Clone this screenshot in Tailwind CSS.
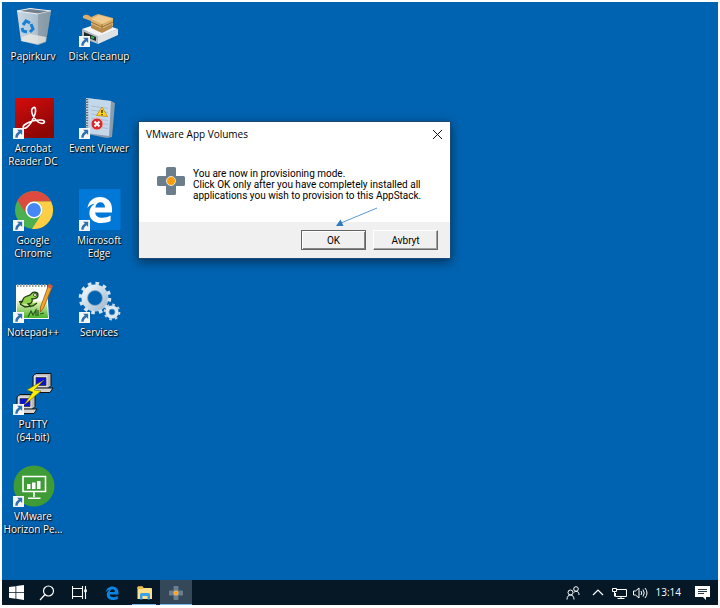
<!DOCTYPE html>
<html lang="nb">
<head>
<meta charset="utf-8">
<title>Desktop</title>
<script src="https://cdn.jsdelivr.net/npm/@tailwindcss/browser@4"></script>
</head>
<body class="flex min-h-screen flex-col bg-white p-[2px] pb-[3px] font-['Open_Sans','Noto_Sans',sans-serif]">
<svg class="absolute size-0" aria-hidden="true">
  <defs>
    <symbol id="shortcut" viewBox="0 0 12 12">
      <rect width="12" height="12" fill="#f4f6f8"/>
      <path d="M4.500 2h5.500v5.500L8.200 5.800C6.300 7 5.200 8.500 5 10.500H2.500C2.400 7.800 3.800 5.300 6.300 3.900z" fill="#2f6fae"/>
    </symbol>
    <symbol id="volumes" viewBox="0 0 28 28">
      <path d="M10.500 0h7a1.500 1.500 0 0 1 1.500 1.500V9h7.500a1.500 1.500 0 0 1 1.500 1.500v7a1.500 1.500 0 0 1-1.500 1.500H19v7.500a1.500 1.500 0 0 1-1.500 1.500h-7A1.500 1.500 0 0 1 9 26.500V19H1.500A1.500 1.500 0 0 1 0 17.500v-7A1.500 1.500 0 0 1 1.500 9H9V1.500A1.500 1.500 0 0 1 10.500 0z" fill="#6c7e8c"/>
      <circle cx="14" cy="14" r="4.500" fill="#ff9d0a" stroke="#e9e4d6"/>
    </symbol>
    <symbol id="edge" viewBox="0 0 28 28">
      <path d="M1.500 12.500C2.500 5.500 7.500 1 14.500 1 22 1 27 6 27 13.500V17H9.500c.3 4 3.500 5.500 7.500 5.500 3 0 5.800-.8 8.500-2.300V26c-3 1.500-6 2-9.500 2C8 28 3.500 23.500 3.500 17.500c0-4 2-7.500 5.500-9.500C5.500 8.500 3 10 1.500 12.500zM9.700 12h10C19.600 8.500 18 6.500 15 6.500S10.200 8.500 9.700 12z"/>
    </symbol>
    <linearGradient id="red" x1="0" y1="0" x2=".5" y2="1"><stop stop-color="#d50c0c"/><stop offset="1" stop-color="#8c0606"/></linearGradient>
    <linearGradient id="bin" x1="0" x2="1"><stop stop-color="#dfe5ea"/><stop offset=".55" stop-color="#c3ccd4"/><stop offset="1" stop-color="#8f9ca6"/></linearGradient>
    <linearGradient id="steel" x1="0" y1="0" x2="1" y2="1"><stop stop-color="#eef6fb"/><stop offset="1" stop-color="#a3bccf"/></linearGradient>
    <linearGradient id="grass" x1="0" y1="0" x2="0" y2="1"><stop stop-color="#f2f6c8"/><stop offset="1" stop-color="#46b429"/></linearGradient>
  </defs>
</svg>

<main class="relative flex-1 overflow-hidden bg-[#0063b1]">
  <ul class="grid grid-flow-col grid-cols-[62px_62px] grid-rows-[repeat(6,92px)] justify-start gap-x-1 pt-[3px] text-center text-[10px] leading-[13px] text-white [text-shadow:1px_1px_1px_#000,0_0_2px_#000]">
    <li><a href="#" class="flex flex-col items-center gap-px">
      <svg class="size-11" viewBox="0 0 44 44" aria-hidden="true">
        <path d="M6 6 19 3.500 40 6l-5 31-8 3-17-4z" fill="url(#bin)" opacity=".9"/>
        <path d="M6 6 19 3.500 40 6 27 9z" fill="#71818d" stroke="#eef1f4"/>
        <path d="M27 9l13-3-5 31-8 3z" fill="#8797a3" opacity=".7"/>
        <path d="M11 32l8-3 16 3-.5 4.500L27 39l-16-3z" fill="#eee9e4" opacity=".75"/>
        <g fill="none" stroke="#1480d8" stroke-width="3"><path d="M12 20l3-4 4 2"/><path d="M20 19l2 5-3 3"/><path d="M16 27l-4-1-1-3"/></g>
      </svg><span>Papirkurv</span></a></li>
    <li><a href="#" class="flex flex-col items-center gap-px">
      <svg class="size-11" viewBox="0 0 44 44" aria-hidden="true">
        <rect x="4" y="1" width="39" height="40" fill="url(#red)"/>
        <path d="M22 11c2-2 3.500 1 2 6-1.500 4.500-5 11-8.500 13.500-3 2-5-.5-1.500-3 4-2.700 10-4.500 15.500-4.500 5 0 5 3.500 1.500 3.500-4 0-8-5-9.500-9-1-2.500-1-5.500.5-6.500z" fill="none" stroke="#fff" stroke-width="1.600"/>
        <use href="#shortcut" x="2" y="31" width="11" height="11"/>
      </svg><span>Acrobat<br>Reader DC</span></a></li>
    <li><a href="#" class="flex flex-col items-center gap-px">
      <svg class="size-11" viewBox="0 0 44 44" aria-hidden="true">
        <circle cx="23" cy="21" r="19" fill="#4caf50"/>
        <path d="M6.550 11.500A19 19 0 0 1 39.450 11.500L41 12.500H23A8.500 8.500 0 0 0 15.640 25.250z" fill="#dd4b3e"/>
        <path d="M39.950 12.500A19 19 0 0 1 21 39.900L30.360 25.250A8.500 8.500 0 0 0 23 12.500z" fill="#ffce44"/>
        <circle cx="23" cy="21" r="8.500" fill="#fff"/><circle cx="23" cy="21" r="6.900" fill="#4587f3"/>
        <use href="#shortcut" x="2" y="31" width="11" height="11"/>
      </svg><span>Google<br>Chrome</span></a></li>
    <li><a href="#" class="flex flex-col items-center gap-px">
      <svg class="size-11" viewBox="0 0 44 44" aria-hidden="true">
        <path d="M5 4h31l2 34H5z" fill="#fdfdfa"/>
        <path d="M6 20h30l1 17H6z" fill="url(#grass)"/>
        <path d="M6 4.500h29" stroke="#8f9a92" stroke-width="3" stroke-dasharray="1.500 1.500"/>
        <path d="M9 23c3-1 2-6 5-7 3-2 5-1 6-3 2-3 7-2 7 1 0 4-4 4-6 4 1 3-1 5-4 5l3 3M9 23l5 3 8-1 4-3M12 20l-4 1" fill="#8fd34a" stroke="#203d13" stroke-width="1.300"/>
        <circle cx="24" cy="14" r="1.500" fill="#fff" stroke="#222" stroke-width=".7"/>
        <path d="M17 36l3-6 2 4 3-5v6m2-6v6m2-2 4-1" fill="none" stroke="#26571b" stroke-width="1.200"/>
        <path d="M38 3l3.500 2-9 22-3 4v-5z" fill="#f4a62a" stroke="#a15c14" stroke-width=".8"/><path d="M38 3l3.500 2-1.200 3-3.500-2z" fill="#d95745"/>
        <use href="#shortcut" x="2" y="31" width="11" height="11"/>
      </svg><span>Notepad++</span></a></li>
    <li><a href="#" class="flex flex-col items-center gap-px">
      <svg class="size-11" viewBox="0 0 44 44" aria-hidden="true">
        <g id="pc"><path d="M22 3l3-2.500h15v12l-3 3H22z" fill="#b9b9b9" stroke="#111"/><path d="M23 2.500h13.500V14H23z" fill="#dedede"/><path d="M25 4.500h10v8H25z" fill="#0a10d8" stroke="#333" stroke-width=".7"/>
        <path d="M20 18l4-3h18l-3 4.500H20z" fill="#d2d2d2" stroke="#111"/></g>
        <use href="#pc" x="-16" y="21"/>
        <path d="M33 7 16 17l6 2-9 13 17-14-7-1z" fill="#ffef00" stroke="#777100" stroke-width=".6"/>
        <use href="#shortcut" x="2" y="31" width="11" height="11"/>
      </svg><span>PuTTY<br>(64-bit)</span></a></li>
    <li><a href="#" class="flex flex-col items-center gap-px">
      <svg class="size-11" viewBox="0 0 44 44" aria-hidden="true">
        <circle cx="23" cy="21" r="20.500" fill="#3f9b35"/>
        <path d="M12 11.500h22.500v15H12zM23 26.500V32m-6 1.200h12.500" fill="none" stroke="#fff" stroke-width="1.600"/>
        <path d="M16 19h3.500v5H16zM21 17.500h3.500V24H21zM26 16h3.500v8H26z" fill="#fff"/>
        <use href="#shortcut" x="2" y="31" width="11" height="11"/>
      </svg><span>VMware<br><span class="whitespace-nowrap">Horizon Pe...</span></span></a></li>
    <li><a href="#" class="flex flex-col items-center gap-px">
      <svg class="size-11" viewBox="0 0 44 44" aria-hidden="true">
        <path d="M5 24 23 18l18 6-20 8z" fill="#f3f4f5"/>
        <path d="M5 24l16 7v8L5 33z" fill="#b7bcc0"/><path d="M21 31l20-7v6l-20 9z" fill="#dfe2e4"/>
        <path d="M7 27l12 5v4L7 31z" fill="#20292a"/><path d="M14 32l3 1" stroke="#31c443" stroke-width="2"/>
        <path d="M6 11q4-3 8 1l7-3 15 4v8l-10 6-12-5v-6l-8-3z" fill="#d9ae6b"/>
        <path d="M14 14l8-4 14 4-11 5z" fill="#efca8d"/><path d="M14 17l11 5 11-5M25 19v8" stroke="#9c7438" fill="none"/>
        <path d="M14 19l11 5 10-5v4l-10 5-11-5z" fill="#b98b4b"/>
        <use href="#shortcut" x="2" y="31" width="11" height="11"/>
      </svg><span class="whitespace-nowrap">Disk Cleanup</span></a></li>
    <li><a href="#" class="flex flex-col items-center gap-px">
      <svg class="size-11" viewBox="0 0 44 44" aria-hidden="true">
        <path d="M10 1l24 3 4 2-3 34-5 1-20-4z" fill="#8a9daf"/>
        <path d="M9 1l25 3-2 35-23-3z" fill="#c3d8ea"/>
        <path d="M14 9l17 2.500M14 13l17 2.500M14 17l17 2.500M14 21l17 2.500M14 25l17 2.500M14 29l17 2.500" stroke="#9fb8d0" stroke-width=".8"/>
        <path d="M9.500 2v34" stroke="#5a6a79" stroke-width="3.500" stroke-dasharray="1.300 1.300"/>
        <path d="M25 10l5.500 9.500-11-1z" fill="#ffd21c" stroke="#c98d06" stroke-width=".8" stroke-linejoin="round"/><path d="M25 13v3m0 1v1.200" stroke="#332" stroke-width="1.400"/>
        <circle cx="20" cy="27" r="6" fill="#d42a2f" stroke="#f0b6b6"/><path d="M17.500 24.500l5 5m0-5-5 5" stroke="#fff" stroke-width="2"/>
        <use href="#shortcut" x="2" y="31" width="11" height="11"/>
      </svg><span class="whitespace-nowrap">Event Viewer</span></a></li>
    <li><a href="#" class="flex flex-col items-center gap-px">
      <svg class="size-11" viewBox="0 0 44 44" aria-hidden="true">
        <path d="M2 0h41.500v41H2z" fill="#0078d7"/>
        <use href="#edge" x="9" y="7" width="27" height="27" fill="#fff"/>
        <use href="#shortcut" x="2" y="31" width="11" height="11"/>
      </svg><span>Microsoft<br>Edge</span></a></li>
    <li><a href="#" class="flex flex-col items-center gap-px">
      <svg class="size-11" viewBox="0 0 44 44" aria-hidden="true">
        <circle cx="18" cy="17" r="10.500" fill="none" stroke="url(#steel)" stroke-width="6"/>
        <circle cx="18" cy="17" r="14.500" fill="none" stroke="#d3e3ef" stroke-width="3.500" stroke-dasharray="3.600 3.992"/>
        <circle cx="18" cy="17" r="7.500" fill="none" stroke="#8eabc2" stroke-width=".8"/>
        <circle cx="35" cy="31" r="4.800" fill="none" stroke="#dce9f2" stroke-width="3.600"/>
        <circle cx="35" cy="31" r="7.300" fill="none" stroke="#c4d7e5" stroke-width="2.200" stroke-dasharray="2.600 3.133"/>
        <circle cx="35" cy="31" r="3" fill="none" stroke="#8aa5ba" stroke-width=".7"/>
        <use href="#shortcut" x="2" y="31" width="11" height="11"/>
      </svg><span>Services</span></a></li>
  </ul>

  <section role="dialog" aria-labelledby="dlg-title" class="absolute top-[119px] left-[136px] w-[313px] border border-[#1b4a78] bg-white text-black shadow-[0_3px_10px_rgba(0,0,0,0.5)]">
    <header class="flex h-6 items-center justify-between pr-2 pl-[7px]">
      <h1 id="dlg-title" class="text-[10px] leading-6">VMware App Volumes</h1>
      <button type="button" aria-label="Close" class="size-[9px]"><svg class="size-[9px]" viewBox="0 0 9 9" fill="none" stroke="#111" aria-hidden="true"><path d="M0 0l9 9m0-9L0 9"/></svg></button>
    </header>
    <div class="flex gap-2 pt-[21px] pb-[21px] pl-[18px]">
      <svg class="size-7 shrink-0" aria-hidden="true"><use href="#volumes"/></svg>
      <p class="pt-px font-[Roboto,sans-serif] text-[10px] leading-[11px] whitespace-nowrap">You are now in provisioning mode.<br>Click OK only after you have completely installed all<br>applications you wish to provision to this AppStack.</p>
    </div>
    <footer class="flex h-9 items-center justify-end gap-[7px] bg-[#f0f0f0] pr-3 font-[Roboto,sans-serif] text-[10px]">
      <button type="button" class="h-5 w-[65px] border border-[#646464] shadow-[inset_1px_1px_#fff,inset_-1px_-1px_#848484]">OK</button>
      <button type="button" class="h-5 w-[65px] border border-t-white border-r-[#696969] border-b-[#696969] border-l-white shadow-[inset_-1px_-1px_#a0a0a0]">Avbryt</button>
    </footer>
  </section>
  <svg class="absolute top-[204px] left-[333px] h-6 w-11" viewBox="0 0 44 24" aria-hidden="true"><path d="M42 2 6 17" stroke="#5b9bd5" fill="none"/><path d="M1 20l4.500-6.500 3 6.500z" fill="#2e7cc0"/></svg>
</main>

<nav aria-label="Taskbar" class="flex h-[25px] items-center justify-between bg-[#061826] pr-2 text-white">
  <div class="flex h-full">
    <button type="button" aria-label="Start" class="flex w-[29px] items-center justify-center"><svg class="size-[15px]" viewBox="0 0 15 15" fill="#fff" aria-hidden="true"><path d="M0 2l6.500-.8V7H0zM7.300 1.100 15 0v7H7.300zM0 7.800h6.500v5.900L0 12.800zM7.300 7.800H15V15l-7.700-1.200z"/></svg></button>
    <button type="button" aria-label="Search" class="flex w-8 items-center justify-center"><svg class="size-4" viewBox="0 0 16 16" fill="none" stroke="#fff" stroke-width="1.200" aria-hidden="true"><circle cx="9.500" cy="6" r="5"/><path d="M6 9.500 1 15"/></svg></button>
    <button type="button" aria-label="Task view" class="flex w-8 items-center justify-center"><svg class="size-[15px]" viewBox="0 0 15 15" fill="none" stroke="#fff" stroke-width="1.100" aria-hidden="true"><path d="M.5 1v2.500h10V1M.5 14v-2.500h10V14M.5 3.500v8M10.500 3.500v8M13.500 1v13"/><path d="M12.200 4.500h2.600v2.600h-2.600z" fill="#fff" stroke="none"/></svg></button>
    <button type="button" aria-label="Microsoft Edge" class="flex w-[33px] items-center justify-center"><svg class="size-[14px] fill-[#0a84e0]" aria-hidden="true"><use href="#edge"/></svg></button>
    <button type="button" aria-label="File Explorer" class="relative flex w-8 items-center justify-center after:absolute after:inset-x-1 after:bottom-0 after:h-px after:bg-[#76b9ed]"><svg class="h-[14px] w-[15px]" viewBox="0 0 15 14" aria-hidden="true"><path d="M.5 1.500Q.5.500 1.500.500h4l1 1.500H14q1 0 1 1v10H.5z" fill="#ffe08a"/><path d="M.5 1.500Q.5.500 1.500.500h4l1 1.500v1H.5z" fill="#f0bd4c"/><path d="M3 13.500V8.500Q3 7 4.500 7h7Q13 7 13 8.500v5h-2.500V10h-5v3.500z" fill="#3ba0e8"/></svg></button>
    <button type="button" aria-label="VMware App Volumes" class="relative flex w-8 items-center justify-center bg-[#35485a] after:absolute after:inset-x-0 after:bottom-0 after:h-px after:bg-[#76b9ed]"><svg class="size-[14px]" aria-hidden="true"><use href="#volumes"/></svg></button>
  </div>
  <div class="flex items-center">
    <button type="button" aria-label="People" class="mr-3"><svg class="size-[14px]" viewBox="0 0 14 14" fill="none" stroke="#fff" aria-hidden="true"><circle cx="4.500" cy="6.500" r="2.500"/><path d="M1 13.500C1 10.500 2.500 9 4.500 9S8 10.500 8 13.500"/><circle cx="10" cy="3" r="2.300"/><path d="M8 6.500C8.500 5.500 9 5.300 10 5.300c2 0 3 1.200 3 3.700"/></svg></button>
    <button type="button" aria-label="Show hidden icons" class="mr-2"><svg class="h-[7px] w-3" viewBox="0 0 12 7" fill="none" stroke="#fff" stroke-width="1.200" aria-hidden="true"><path d="M1 6l5-5 5 5"/></svg></button>
    <button type="button" aria-label="Network" class="mr-[6px]"><svg class="h-3 w-[15px]" viewBox="0 0 15 12" fill="none" stroke="#fff" aria-hidden="true"><path d="M5 2.500h9.500v7H3.500V6M9 9.500v2M5.500 11.500h7M.5 1.500h4v3h-4zM2.500 4.500v5"/></svg></button>
    <button type="button" aria-label="Volume" class="mr-2"><svg class="h-3 w-[15px]" viewBox="0 0 15 12" fill="none" stroke="#fff" aria-hidden="true"><path d="M.5 4h2L6 1v10L2.500 8h-2zM8 4q1.500 2 0 4M10 2.500q2.500 3.500 0 7M12 1q4 5 0 10"/></svg></button>
    <time class="mr-[14px] text-[10px] leading-[13px]">13:14</time>
    <button type="button" aria-label="Notifications"><svg class="h-[14px] w-[15px]" viewBox="0 0 15 14" aria-hidden="true"><path d="M0 0h15v11h-4v3l-3-3H0z" fill="#fff"/><path d="M3 3.500h9M3 5.500h9M3 7.500h6" stroke="#22384a"/></svg></button>
  </div>
</nav>
</body>
</html>
